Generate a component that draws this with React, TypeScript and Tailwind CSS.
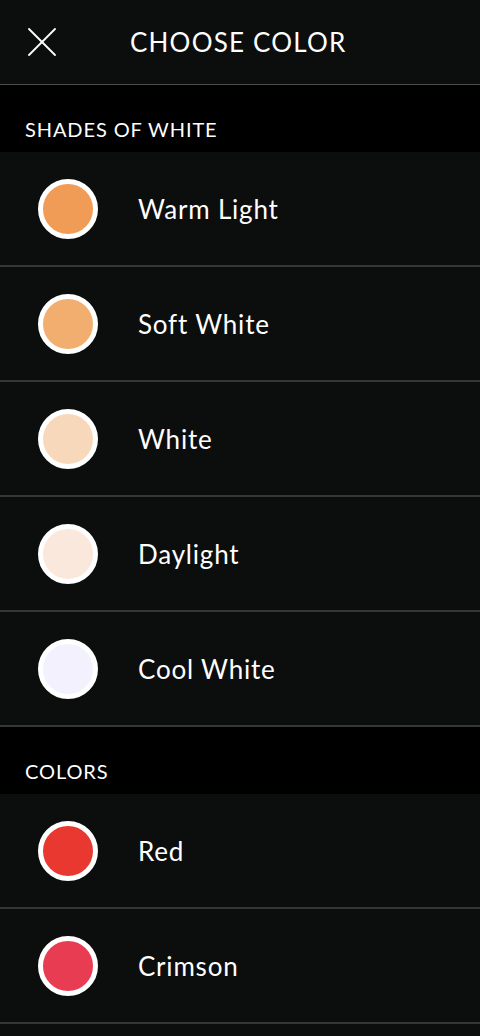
import React from "react";

type Swatch = { name: string; color: string };

const shades: Swatch[] = [
  { name: "Warm Light", color: "#f09b56" },
  { name: "Soft White", color: "#f2ae6e" },
  { name: "White", color: "#f7d8ba" },
  { name: "Daylight", color: "#fbe8dc" },
  { name: "Cool White", color: "#f3f1fd" },
];

const colors: Swatch[] = [
  { name: "Red", color: "#e8382f" },
  { name: "Crimson", color: "#e83c53" },
];

function SectionHeader({ label }: { label: string }) {
  return (
    <div className="flex h-[67px] items-end bg-black pb-[13px] pl-[25px]">
      <span className="text-[20px] leading-none text-white tracking-[0.9px]">{label}</span>
    </div>
  );
}

function Row({ item }: { item: Swatch }) {
  return (
    <div className="flex h-[115px] items-center border-b-2 border-[#353636] bg-[#0c0d0d]">
      <div className="ml-[38px] h-[60px] w-[60px] rounded-full border-[5px] border-white" style={{ background: item.color }} />
      <span className="ml-[40px] text-[26px] leading-none text-white tracking-[0.8px]">{item.name}</span>
    </div>
  );
}

export default function App() {
  return (
    <div className="h-[1036px] w-[480px] overflow-hidden bg-[#0c0d0d] font-['Lato','Noto_Sans',sans-serif]">
      {/* Top bar */}
      <header className="flex h-[85px] items-center border-b border-[#4a4b4b] bg-[#0c0d0d]">
        <button className="ml-[28px] flex h-[28px] w-[28px] items-center justify-center">
          <svg width="28" height="28" viewBox="0 0 28 28" fill="none" stroke="#ffffff" strokeWidth="1.8" strokeLinecap="round">
            <path d="M1 1 L27 27" />
            <path d="M27 1 L1 27" />
          </svg>
        </button>
        <h1 className="ml-[74px] text-[26px] leading-none text-white tracking-[1.2px]">CHOOSE COLOR</h1>
      </header>

      <SectionHeader label="SHADES OF WHITE" />
      {shades.map((s) => (
        <Row key={s.name} item={s} />
      ))}

      <SectionHeader label="COLORS" />
      {colors.map((s) => (
        <Row key={s.name} item={s} />
      ))}
    </div>
  );
}
